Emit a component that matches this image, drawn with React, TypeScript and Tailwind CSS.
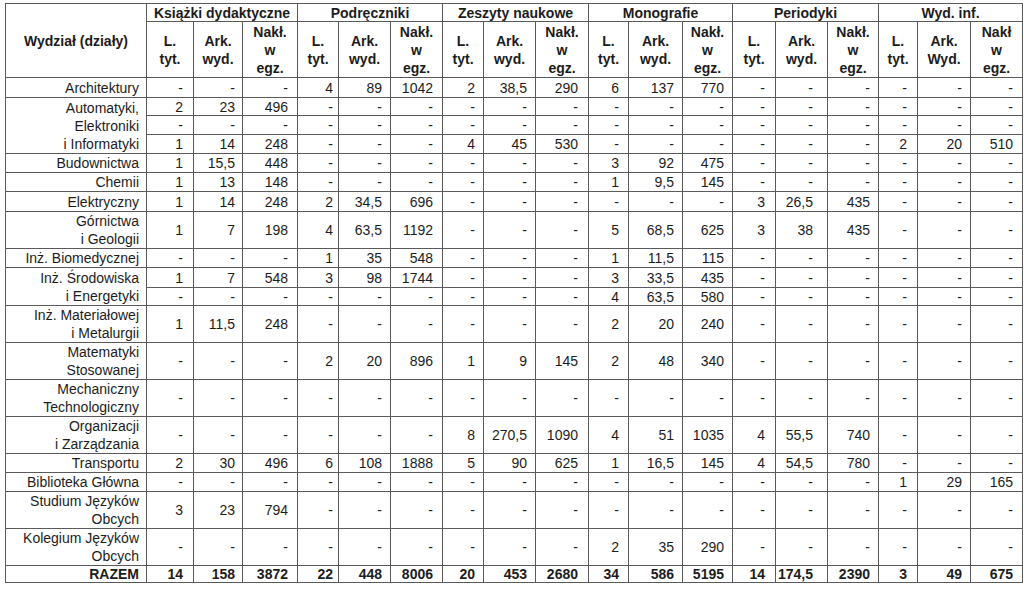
const groups = ['Książki dydaktyczne', 'Podręczniki', 'Zeszyty naukowe', 'Monografie', 'Periodyki', 'Wyd. inf.'];

// width + right padding for each of the 18 numeric columns
const cols = [
  { w: 'w-[47px]', pr: 'pr-[10px]' },
  { w: 'w-[49px]', pr: 'pr-[7px]' },
  { w: 'w-[55px]', pr: 'pr-[9px]' },
  { w: 'w-[41px]', pr: 'pr-[5px]' },
  { w: 'w-[52px]', pr: 'pr-[8px]' },
  { w: 'w-[52px]', pr: 'pr-[9px]' },
  { w: 'w-[41px]', pr: 'pr-[8px]' },
  { w: 'w-[52px]', pr: 'pr-[8px]' },
  { w: 'w-[53px]', pr: 'pr-[10px]' },
  { w: 'w-[40px]', pr: 'pr-[9px]' },
  { w: 'w-[54px]', pr: 'pr-[8px]' },
  { w: 'w-[50px]', pr: 'pr-[8px]' },
  { w: 'w-[43px]', pr: 'pr-[10px]' },
  { w: 'w-[52px]', pr: 'pr-[14px]' },
  { w: 'w-[51px]', pr: 'pr-[8px]' },
  { w: 'w-[39px]', pr: 'pr-[10px]' },
  { w: 'w-[53px]', pr: 'pr-[8px]' },
  { w: 'w-[52px]', pr: 'pr-[9px]' },
];

const sub = [
  ['L.', 'tyt.'],
  ['Ark.', 'wyd.'],
  ['Nakł.', 'w', 'egz.'],
];
const lastSub = [
  ['L.', 'tyt.'],
  ['Ark.', 'Wyd.'],
  ['Nakł', 'w', 'egz.'],
];

interface Row {
  label: string[] | null;
  span?: number;
  h: string;
  bold?: boolean;
  cells: string;
}

const rows: Row[] = [
  { label: ['Architektury'], h: 'h-[20px]', cells: '- - - 4 89 1042 2 38,5 290 6 137 770 - - - - - -' },
  { label: ['Automatyki,', 'Elektroniki', 'i Informatyki'], span: 3, h: 'h-[18px]', cells: '2 23 496 - - - - - - - - - - - - - - -' },
  { label: null, h: 'h-[19px]', cells: '- - - - - - - - - - - - - - - - - -' },
  { label: null, h: 'h-[19px]', cells: '1 14 248 - - - 4 45 530 - - - - - - 2 20 510' },
  { label: ['Budownictwa'], h: 'h-[19px]', cells: '1 15,5 448 - - - - - - 3 92 475 - - - - - -' },
  { label: ['Chemii'], h: 'h-[19px]', cells: '1 13 148 - - - - - - 1 9,5 145 - - - - - -' },
  { label: ['Elektryczny'], h: 'h-[20px]', cells: '1 14 248 2 34,5 696 - - - - - - 3 26,5 435 - - -' },
  { label: ['Górnictwa', 'i Geologii'], h: 'h-[36px]', cells: '1 7 198 4 63,5 1192 - - - 5 68,5 625 3 38 435 - - -' },
  { label: ['Inż. Biomedycznej'], h: 'h-[19px]', cells: '- - - 1 35 548 - - - 1 11,5 115 - - - - - -' },
  { label: ['Inż. Środowiska', 'i Energetyki'], span: 2, h: 'h-[20px]', cells: '1 7 548 3 98 1744 - - - 3 33,5 435 - - - - - -' },
  { label: null, h: 'h-[18px]', cells: '- - - - - - - - - 4 63,5 580 - - - - - -' },
  { label: ['Inż. Materiałowej', 'i Metalurgii'], h: 'h-[37px]', cells: '1 11,5 248 - - - - - - 2 20 240 - - - - - -' },
  { label: ['Matematyki', 'Stosowanej'], h: 'h-[36px]', cells: '- - - 2 20 896 1 9 145 2 48 340 - - - - - -' },
  { label: ['Mechaniczny', 'Technologiczny'], h: 'h-[37px]', cells: '- - - - - - - - - - - - - - - - - -' },
  { label: ['Organizacji', 'i Zarządzania'], h: 'h-[37px]', cells: '- - - - - - 8 270,5 1090 4 51 1035 4 55,5 740 - - -' },
  { label: ['Transportu'], h: 'h-[19px]', cells: '2 30 496 6 108 1888 5 90 625 1 16,5 145 4 54,5 780 - - -' },
  { label: ['Biblioteka Główna'], h: 'h-[19px]', cells: '- - - - - - - - - - - - - - - 1 29 165' },
  { label: ['Studium Języków', 'Obcych'], h: 'h-[36px]', cells: '3 23 794 - - - - - - - - - - - - - - -' },
  { label: ['Kolegium Języków', 'Obcych'], h: 'h-[37px]', cells: '- - - - - - - - - 2 35 290 - - - - - -' },
  { label: ['RAZEM'], h: 'h-[17px]', bold: true, cells: '14 158 3872 22 448 8006 20 453 2680 34 586 5195 14 174,5 2390 3 49 675' },
];

const cell = 'border border-[#5a5a5a] p-0';

function Lines({ lines }: { lines: string[] }) {
  return (
    <>
      {lines.map((l, i) => (
        <div key={i}>{l}</div>
      ))}
    </>
  );
}

export default function App() {
  return (
    <div className="min-h-[590px] w-[1024px] bg-white pt-[3px] pl-[5px] font-['Liberation_Sans',Arial,sans-serif] text-[14px] leading-[16px] text-[#1c1c1c]">
      <table className="w-[1017px] table-fixed border-collapse">
        <colgroup>
          <col className="w-[141px]" />
          {cols.map((c, i) => (
            <col key={i} className={c.w} />
          ))}
        </colgroup>
        <thead>
          <tr className="h-[18px]">
            <th rowSpan={2} className={`${cell} text-center align-middle font-bold whitespace-nowrap`}>
              Wydział (działy)
            </th>
            {groups.map((g) => (
              <th key={g} colSpan={3} className={`${cell} text-center align-middle font-bold whitespace-nowrap`}>
                {g}
              </th>
            ))}
          </tr>
          <tr className="h-[56px]">
            {groups.map((g, gi) =>
              (gi === groups.length - 1 ? lastSub : sub).map((s, si) => (
                <th key={g + si} className={`${cell} text-center align-middle font-bold leading-[18px]`}>
                  <Lines lines={s} />
                </th>
              ))
            )}
          </tr>
        </thead>
        <tbody>
          {rows.map((r, ri) => (
            <tr key={ri} className={`${r.h} ${r.bold ? 'font-bold' : ''}`}>
              {r.label && (
                <td
                  rowSpan={r.span ?? 1}
                  className={`${cell} pr-[7px] text-right align-middle whitespace-nowrap ${r.label.length > 1 ? 'leading-[18px]' : ''}`}
                >
                  <Lines lines={r.label} />
                </td>
              )}
              {r.cells.split(' ').map((v, ci) => (
                <td key={ci} className={`${cell} ${cols[ci].pr} text-right align-middle whitespace-nowrap`}>
                  {v}
                </td>
              ))}
            </tr>
          ))}
        </tbody>
      </table>
    </div>
  );
}
